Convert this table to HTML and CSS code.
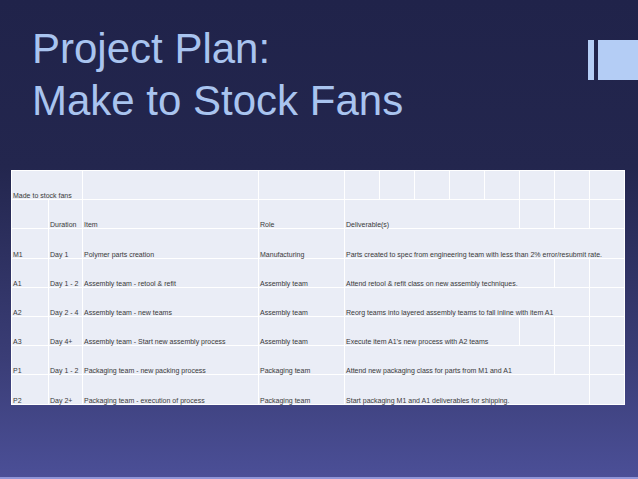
FILE: index.html
```html
<!DOCTYPE html>
<html>
<head>
<meta charset="utf-8">
<link rel="stylesheet" href="styles.css">
</head>
<body>
<div class="slide">
  <header class="head">
    <h1 class="title">Project Plan:<br>Make to Stock Fans</h1>
    <div class="mark"><span class="bar-thin"></span><span class="bar-thick"></span></div>
  </header>
  <table class="plan">
    <colgroup>
      <col class="c0"><col class="c1"><col class="c2"><col class="c3">
      <col class="cs"><col class="cs"><col class="cs"><col class="cs">
      <col class="cs"><col class="cs"><col class="cs"><col class="cs">
    </colgroup>
    <tr><td colspan="2">Made to stock fans</td><td></td><td></td><td></td><td></td><td></td><td></td><td></td><td></td><td></td><td></td></tr>
    <tr><td></td><td>Duration</td><td>Item</td><td>Role</td><td colspan="5">Deliverable(s)</td><td></td><td></td><td></td></tr>
    <tr><td>M1</td><td>Day 1</td><td>Polymer parts creation</td><td>Manufacturing</td><td colspan="8">Parts created to spec from engineering team with less than 2% error/resubmit rate.</td></tr>
    <tr><td>A1</td><td>Day 1 - 2</td><td>Assembly team - retool &amp; refit</td><td>Assembly team</td><td colspan="6">Attend retool &amp; refit class on new assembly techniques.</td><td></td><td></td></tr>
    <tr><td>A2</td><td>Day 2 - 4</td><td>Assembly team - new teams</td><td>Assembly team</td><td colspan="7">Reorg teams into layered assembly teams to fall inline with item A1</td><td></td></tr>
    <tr><td>A3</td><td>Day 4+</td><td>Assembly team - Start new assembly process</td><td>Assembly team</td><td colspan="5">Execute item A1’s new process with A2 teams</td><td></td><td></td><td></td></tr>
    <tr><td>P1</td><td>Day 1 - 2</td><td>Packaging team - new packing process</td><td>Packaging team</td><td colspan="6">Attend new packaging class for parts from M1 and A1</td><td></td><td></td></tr>
    <tr><td>P2</td><td>Day 2+</td><td>Packaging team - execution of process</td><td>Packaging team</td><td colspan="7">Start packaging M1 and A1 deliverables for shipping.</td><td></td></tr>
  </table>
</div>
</body>
</html>
```

FILE: styles.css
```css
html, body {
  margin: 0;
  padding: 0;
}
body {
  width: 638px;
  height: 479px;
  overflow: hidden;
}
.slide {
  width: 638px;
  height: 479px;
  box-sizing: border-box;
  background: linear-gradient(to bottom, #20234a 0%, #23264e 35%, #3a3d76 75%, #4b4f97 100%);
  border-bottom: 2px solid #9095d8;
  display: flex;
  flex-direction: column;
  font-family: "Liberation Sans", Arial, sans-serif;
}
.head {
  display: flex;
  justify-content: space-between;
  align-items: flex-start;
  padding: 23px 0 0 32px;
  height: 170px;
  flex: 0 0 170px;
  box-sizing: border-box;
}
.title {
  margin: 0;
  font-weight: normal;
  font-size: 42px;
  line-height: 52px;
  color: #a9c4ef;
}
.mark {
  display: flex;
  gap: 4px;
  margin-top: 17px;
}
.bar-thin {
  width: 6px;
  height: 40px;
  background: #b4cdf5;
}
.bar-thick {
  width: 40px;
  height: 40px;
  background: #b4cdf5;
}
.plan {
  margin-left: 11px;
  width: 613px;
  table-layout: fixed;
  border-collapse: collapse;
  background: #eaedf6;
  font-size: 7px;
  color: #3a3a3a;
}
.c0 { width: 37px; }
.c1 { width: 34px; }
.c2 { width: 176px; }
.c3 { width: 86px; }
.cs { width: 35px; }
.plan tr {
  height: 29.2px;
}
.plan td {
  border: 1px solid #ffffff;
  padding: 0 0 0 1px;
  vertical-align: bottom;
  white-space: nowrap;
  overflow: visible;
  line-height: 7px;
}
```
